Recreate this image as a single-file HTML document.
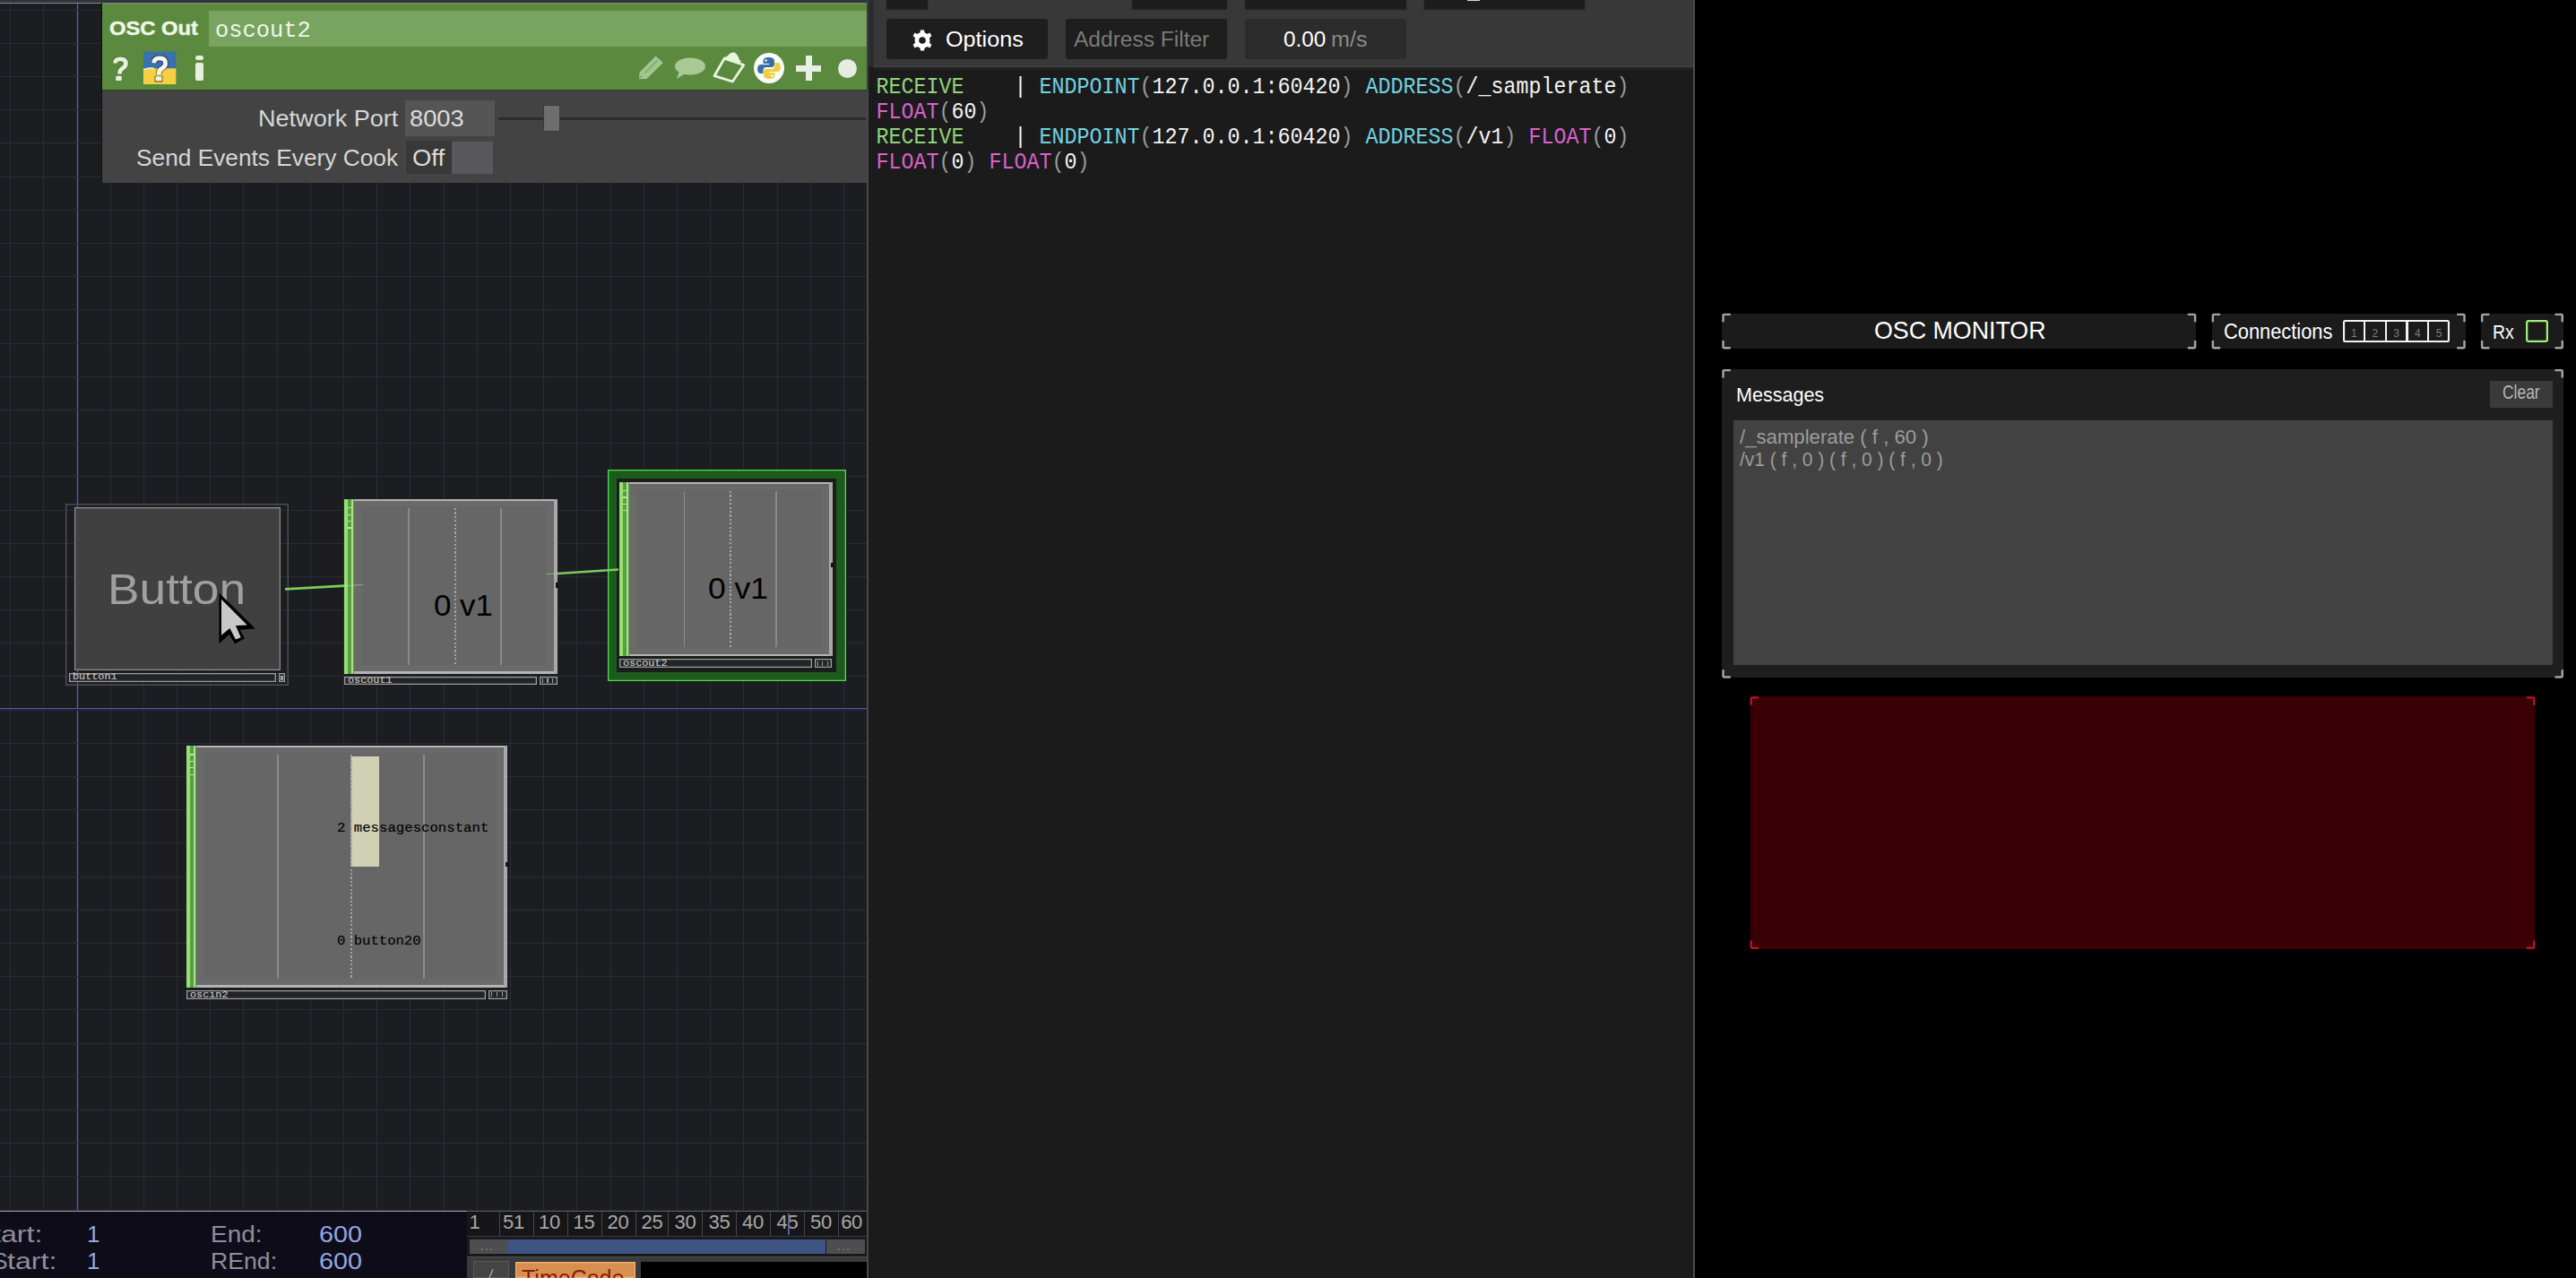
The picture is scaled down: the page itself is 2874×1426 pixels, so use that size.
<!DOCTYPE html>
<html><head><meta charset="utf-8"><style>
html,body{margin:0;padding:0;}
body{width:2874px;height:1426px;overflow:hidden;position:relative;background:#000;}
.a{position:absolute;}
.t{white-space:pre;}
</style></head><body>
<div class="a" style="left:0px;top:0px;width:967px;height:1351px;background:#1c1d21;"></div><div class="a" style="left:10.9px;top:0;width:1px;height:1351px;background:#2b2b3a"></div><div class="a" style="left:48.1px;top:0;width:1px;height:1351px;background:#2b2b3a"></div><div class="a" style="left:85.2px;top:0;width:2.6px;height:1351px;background:#25243c"></div><div class="a" style="left:85.9px;top:0;width:1px;height:1351px;background:#5f5da6"></div><div class="a" style="left:122.5px;top:0;width:1px;height:1351px;background:#2b2b3a"></div><div class="a" style="left:159.7px;top:0;width:1px;height:1351px;background:#2b2b3a"></div><div class="a" style="left:196.9px;top:0;width:1px;height:1351px;background:#2b2b3a"></div><div class="a" style="left:234.1px;top:0;width:1px;height:1351px;background:#2b2b3a"></div><div class="a" style="left:271.3px;top:0;width:1px;height:1351px;background:#2b2b3a"></div><div class="a" style="left:308.5px;top:0;width:1px;height:1351px;background:#2b2b3a"></div><div class="a" style="left:345.8px;top:0;width:1px;height:1351px;background:#2b2b3a"></div><div class="a" style="left:383.0px;top:0;width:1px;height:1351px;background:#2b2b3a"></div><div class="a" style="left:420.2px;top:0;width:1px;height:1351px;background:#2b2b3a"></div><div class="a" style="left:457.4px;top:0;width:1px;height:1351px;background:#2b2b3a"></div><div class="a" style="left:494.6px;top:0;width:1px;height:1351px;background:#2b2b3a"></div><div class="a" style="left:531.8px;top:0;width:1px;height:1351px;background:#2b2b3a"></div><div class="a" style="left:569.0px;top:0;width:1px;height:1351px;background:#2b2b3a"></div><div class="a" style="left:606.2px;top:0;width:1px;height:1351px;background:#2b2b3a"></div><div class="a" style="left:643.4px;top:0;width:1px;height:1351px;background:#2b2b3a"></div><div class="a" style="left:680.6px;top:0;width:1px;height:1351px;background:#2b2b3a"></div><div class="a" style="left:717.8px;top:0;width:1px;height:1351px;background:#2b2b3a"></div><div class="a" style="left:755.0px;top:0;width:1px;height:1351px;background:#2b2b3a"></div><div class="a" style="left:792.2px;top:0;width:1px;height:1351px;background:#2b2b3a"></div><div class="a" style="left:829.4px;top:0;width:1px;height:1351px;background:#2b2b3a"></div><div class="a" style="left:866.6px;top:0;width:1px;height:1351px;background:#2b2b3a"></div><div class="a" style="left:903.8px;top:0;width:1px;height:1351px;background:#2b2b3a"></div><div class="a" style="left:941.1px;top:0;width:1px;height:1351px;background:#2b2b3a"></div><div class="a" style="left:0;top:10.6px;width:967px;height:1px;background:#2b2b3a"></div><div class="a" style="left:0;top:47.8px;width:967px;height:1px;background:#2b2b3a"></div><div class="a" style="left:0;top:85.0px;width:967px;height:1px;background:#2b2b3a"></div><div class="a" style="left:0;top:122.2px;width:967px;height:1px;background:#2b2b3a"></div><div class="a" style="left:0;top:159.4px;width:967px;height:1px;background:#2b2b3a"></div><div class="a" style="left:0;top:196.6px;width:967px;height:1px;background:#2b2b3a"></div><div class="a" style="left:0;top:233.8px;width:967px;height:1px;background:#2b2b3a"></div><div class="a" style="left:0;top:270.9px;width:967px;height:1px;background:#2b2b3a"></div><div class="a" style="left:0;top:308.1px;width:967px;height:1px;background:#2b2b3a"></div><div class="a" style="left:0;top:345.3px;width:967px;height:1px;background:#2b2b3a"></div><div class="a" style="left:0;top:382.5px;width:967px;height:1px;background:#2b2b3a"></div><div class="a" style="left:0;top:419.7px;width:967px;height:1px;background:#2b2b3a"></div><div class="a" style="left:0;top:456.9px;width:967px;height:1px;background:#2b2b3a"></div><div class="a" style="left:0;top:494.1px;width:967px;height:1px;background:#2b2b3a"></div><div class="a" style="left:0;top:531.3px;width:967px;height:1px;background:#2b2b3a"></div><div class="a" style="left:0;top:568.5px;width:967px;height:1px;background:#2b2b3a"></div><div class="a" style="left:0;top:605.7px;width:967px;height:1px;background:#2b2b3a"></div><div class="a" style="left:0;top:642.9px;width:967px;height:1px;background:#2b2b3a"></div><div class="a" style="left:0;top:680.0px;width:967px;height:1px;background:#2b2b3a"></div><div class="a" style="left:0;top:717.2px;width:967px;height:1px;background:#2b2b3a"></div><div class="a" style="left:0;top:754.4px;width:967px;height:1px;background:#2b2b3a"></div><div class="a" style="left:0;top:789.6px;width:967px;height:3.2px;background:#25243c"></div><div class="a" style="left:0;top:790.2px;width:967px;height:1px;background:#5a5898"></div><div class="a" style="left:0;top:828.8px;width:967px;height:1px;background:#2b2b3a"></div><div class="a" style="left:0;top:866.0px;width:967px;height:1px;background:#2b2b3a"></div><div class="a" style="left:0;top:903.2px;width:967px;height:1px;background:#2b2b3a"></div><div class="a" style="left:0;top:940.4px;width:967px;height:1px;background:#2b2b3a"></div><div class="a" style="left:0;top:977.6px;width:967px;height:1px;background:#2b2b3a"></div><div class="a" style="left:0;top:1014.7px;width:967px;height:1px;background:#2b2b3a"></div><div class="a" style="left:0;top:1051.9px;width:967px;height:1px;background:#2b2b3a"></div><div class="a" style="left:0;top:1089.1px;width:967px;height:1px;background:#2b2b3a"></div><div class="a" style="left:0;top:1126.3px;width:967px;height:1px;background:#2b2b3a"></div><div class="a" style="left:0;top:1163.5px;width:967px;height:1px;background:#2b2b3a"></div><div class="a" style="left:0;top:1200.7px;width:967px;height:1px;background:#2b2b3a"></div><div class="a" style="left:0;top:1237.9px;width:967px;height:1px;background:#2b2b3a"></div><div class="a" style="left:0;top:1275.1px;width:967px;height:1px;background:#2b2b3a"></div><div class="a" style="left:0;top:1312.3px;width:967px;height:1px;background:#2b2b3a"></div><div class="a" style="left:0;top:1349.5px;width:967px;height:1px;background:#2b2b3a"></div><div class="a" style="left:0px;top:0px;width:967px;height:3px;background:#31343a;"></div><div class="a" style="left:0px;top:2.5px;width:114px;height:1.2px;background:#8a8b92;"></div><div class="a" style="left:966.5px;top:0px;width:2.5px;height:1351px;background:#3c3d42;"></div><div class="a" style="left:969px;top:0px;width:5.5px;height:1426px;background:#1b1b1c;"></div><div class="a" style="left:969px;top:0px;width:5.5px;height:75px;background:#2c2c2e;"></div><div class="a" style="left:113px;top:3px;width:854px;height:201px;background:#434343;"></div><div class="a" style="left:113px;top:3px;width:1px;height:201px;background:#101410;"></div><div class="a" style="left:114px;top:3px;width:853px;height:97px;background:#5b8a3f;"></div><div class="a" style="left:114px;top:2.8px;width:853px;height:1.8px;background:#6e8c60;"></div><div class="a" style="left:232.5px;top:12px;width:734.5px;height:40px;background:#78a460;"></div><div class="a" style="left:114px;top:99.5px;width:853px;height:2.5px;background:#34402f;"></div><div class="a t" style="left:122.15px;top:20.49px;font:bold 22px/24.57px 'Liberation Sans', sans-serif;color:#eef6e8;transform:scaleX(1.0803) ;transform-origin:0 19.91px;-webkit-text-stroke:0.45px #eef6e8;">OSC Out</div><div class="a t" style="left:239.57px;top:20.42px;font:25.8px/29.23px 'Liberation Mono', monospace;color:#eef6e8;transform:scaleX(0.9857) ;transform-origin:0 21.48px;">oscout2</div><div class="a" style="left:451.5px;top:111.5px;width:100.5px;height:40.5px;background:#555555;"></div><div class="a t" style="left:287.83px;top:118.31px;font:25.4px/28.37px 'Liberation Sans', sans-serif;color:#d6d6d6;transform:scaleX(1.0656) ;transform-origin:0 22.99px;">Network Port</div><div class="a t" style="left:457.41px;top:118.31px;font:25.4px/28.37px 'Liberation Sans', sans-serif;color:#dcdcdc;transform:scaleX(1.0737) ;transform-origin:0 22.99px;">8003</div><div class="a" style="left:556px;top:130.5px;width:410px;height:3px;background:#2b2b2b;"></div><div class="a" style="left:606.5px;top:117.5px;width:17px;height:28.5px;background:#6e6e6e;box-shadow:0 0 0 1px #3a3a3a;"></div><div class="a" style="left:453px;top:157px;width:51px;height:37px;background:#383838;"></div><div class="a" style="left:504px;top:158px;width:46px;height:36px;background:#58585c;"></div><div class="a t" style="left:151.62px;top:162.01px;font:25.4px/28.37px 'Liberation Sans', sans-serif;color:#d6d6d6;transform:scaleX(1.0349) ;transform-origin:0 22.99px;">Send Events Every Cook</div><div class="a t" style="left:459.76px;top:162.01px;font:25.4px/28.37px 'Liberation Sans', sans-serif;color:#dcdcdc;transform:scaleX(1.0807) ;transform-origin:0 22.99px;">Off</div><svg class="a" style="left:0;top:0;overflow:visible" width="967" height="100"><g fill="none" stroke-linecap="butt"><path d="M128.2 70.5 Q128.6 65.8 134.2 65.8 Q140.4 65.8 140.4 70.8 Q140.4 73.8 137.4 75.8 Q133.6 78 133.6 80.6 L133.6 82.6" stroke="#27401c" stroke-opacity="0.35" stroke-width="6.8"/><path d="M128.2 70.5 Q128.6 65.8 134.2 65.8 Q140.4 65.8 140.4 70.8 Q140.4 73.8 137.4 75.8 Q133.6 78 133.6 80.6 L133.6 82.6" stroke="#e6f0dc" stroke-width="4.8"/></g><rect x="129.2" y="84.8" width="6.6" height="5.2" rx="1.5" fill="#e6f0dc"/></svg><svg class="a" style="left:0;top:0;overflow:visible" width="967" height="100"><rect x="160" y="57.6" width="36.4" height="36.3" fill="#3a70ae"/><path d="M160 77.5 Q165 75 172 76.3 L196.4 76.3 L196.4 93.9 L160 93.9Z" fill="#f5d042"/><path d="M160 77.6 Q165 75.2 172 76.4" stroke="#e8eef0" stroke-width="1.6" fill="none"/><g fill="none"><path d="M171.6 70.2 Q172 64.8 178 64.8 Q184.6 64.8 184.6 70.4 Q184.6 73.8 181.4 75.8 Q177.4 78 177.4 80.8 L177.4 83" stroke="#2a3020" stroke-opacity="0.55" stroke-width="7"/><path d="M171.6 70.2 Q172 64.8 178 64.8 Q184.6 64.8 184.6 70.4 Q184.6 73.8 181.4 75.8 Q177.4 78 177.4 80.8 L177.4 83" stroke="#f4f8f0" stroke-width="4.8"/></g><rect x="172.4" y="84.4" width="9.2" height="7.4" rx="1" fill="#2a3020" fill-opacity="0.55"/><rect x="173.6" y="85.3" width="6.8" height="5" rx="1.2" fill="#eef4e8"/></svg><div class="a" style="left:217.6px;top:61.6px;width:9.1px;height:5.8px;background:#e6f0dc;border-radius:3px;"></div><div class="a" style="left:217.6px;top:69.7px;width:9.1px;height:20.2px;background:#e6f0dc;border-radius:2px;"></div><svg class="a" style="left:0;top:0;overflow:visible" width="967" height="100"><polygon points="712.6,88.3 713.8,80.6 731.6,62.6 739.8,70 721.5,88" fill="#a3c58e"/><path d="M719.5 81.5 L733.5 67.5" stroke="#86b070" stroke-width="2.2"/><path d="M712.6 88.3 L716 84.8" stroke="#7ea868" stroke-width="1.5"/></svg><svg class="a" style="left:752px;top:64px;overflow:visible" width="36" height="26" viewBox="0 0 36 26"><ellipse cx="18" cy="10" rx="17" ry="9.5" fill="#a9c995"/><path d="M6 15 L3 24 L14 17Z" fill="#a9c995"/></svg><svg class="a" style="left:0;top:0;overflow:visible" width="967" height="100"><polygon points="797,84.7 817.3,91 829.8,72.5 808.2,65.1" fill="none" stroke="#e6f6de" stroke-width="2.8" stroke-linejoin="round"/><path d="M808.6 65.8 L812.5 64.2 Q816.5 58.5 820 61 Q822.5 63.5 823.5 68 L826 69.5" stroke="#e6f6de" stroke-width="3.6" fill="#e6f6de" stroke-linejoin="round"/></svg><svg class="a" style="left:841px;top:59px;overflow:visible" width="34" height="34" viewBox="0 0 34 34"><circle cx="17" cy="17" r="17" fill="#fbfdf8"/><path d="M16.5 5 C11 5 10.5 7.5 10.5 9 L10.5 12 L17 12 L17 13 L8 13 C5.5 13 4 15 4 18 C4 21 5.5 23 8 23 L10.5 23 L10.5 19.5 C10.5 17.5 12 16 14 16 L20 16 C22 16 23 14.5 23 13 L23 9 C23 7 21.5 5 16.5 5Z" fill="#3a6fa6"/><circle cx="13.5" cy="8.5" r="1.2" fill="#fff"/><path d="M17.5 29 C23 29 23.5 26.5 23.5 25 L23.5 22 L17 22 L17 21 L26 21 C28.5 21 30 19 30 16 C30 13 28.5 11 26 11 L23.5 11 L23.5 14.5 C23.5 16.5 22 18 20 18 L14 18 C12 18 11 19.5 11 21 L11 25 C11 27 12.5 29 17.5 29Z" fill="#f2cd3e"/><circle cx="20.5" cy="25.5" r="1.2" fill="#fff"/></svg><div class="a" style="left:898.5px;top:62px;width:7px;height:28px;background:#e8f0e6;"></div><div class="a" style="left:888px;top:72.5px;width:27.5px;height:7px;background:#e8f0e6;"></div><div class="a" style="left:935px;top:66px;width:21px;height:21px;background:#e6ebe4;border-radius:50%;"></div><div class="a" style="left:73px;top:562px;width:248.5px;height:202.5px;background:none;box-shadow:inset 0 0 0 1.5px #4c4d52;"></div><div class="a" style="left:82.5px;top:565.8px;width:230px;height:182.5px;background:#404040;box-shadow:inset 0 0 0 1.2px #8e8e8e;"></div><div class="a t" style="left:119.74px;top:630.34px;font:48.8px/54.51px 'Liberation Sans', sans-serif;color:#a0a0a0;transform:scaleX(1.0917) ;transform-origin:0 44.16px;">Button</div><div class="a" style="left:77px;top:750.6px;width:230.5px;height:10px;background:#232428;box-shadow:inset 0 0 0 1.3px #9c9c9c;"></div><div class="a" style="left:310.5px;top:750.6px;width:7.5px;height:10px;background:#232428;box-shadow:inset 0 0 0 1.3px #9c9c9c;"></div><div class="a" style="left:312.5px;top:753.6px;width:3.5px;height:5px;background:#9c9c9c;"></div><div class="a t" style="left:81.00px;top:749.48px;font:11.8px/13.37px 'Liberation Mono', monospace;color:#c8c8c8;-webkit-text-stroke:0.15px #c8c8c8;">button1</div><div class="a" style="left:384px;top:557.2px;width:238px;height:194.4px;background:#6a6a6a;"></div><div class="a" style="left:403px;top:564.7px;width:207px;height:177.4px;background:#666666;"></div><div class="a" style="left:384px;top:557.2px;width:238px;height:2px;background:#b4b4b4;"></div><div class="a" style="left:384px;top:749.1px;width:238px;height:2.5px;background:#b4b4b4;"></div><div class="a" style="left:618px;top:557.2px;width:4px;height:194.4px;background:#a8a8a8;"></div><div class="a" style="left:384px;top:557.2px;width:10.5px;height:194.4px;background:#5c9c46;"></div><div class="a" style="left:384px;top:557.2px;width:4px;height:194.4px;background:#96e070;"></div><div class="a" style="left:391.9px;top:557.2px;width:2.6px;height:194.4px;background:#a6e48a;"></div><div class="a" style="left:388px;top:566.2px;width:3.9000000000000004px;height:1.3px;background:#b4ec98;"></div><div class="a" style="left:388px;top:573.6px;width:3.9000000000000004px;height:1.3px;background:#b4ec98;"></div><div class="a" style="left:388px;top:581.0px;width:3.9000000000000004px;height:1.3px;background:#b4ec98;"></div><div class="a" style="left:388px;top:588.4000000000001px;width:3.9000000000000004px;height:1.3px;background:#b4ec98;"></div><div class="a" style="left:455.25px;top:567.2px;width:1.6px;height:174.4px;background:#8a8a8a;"></div><div class="a" style="left:506.7px;top:567.2px;width:2px;height:174.4px;background:repeating-linear-gradient(#a4a4a4 0 2.2px, transparent 2.2px 4.4px)"></div><div class="a" style="left:558.25px;top:567.2px;width:1.6px;height:174.4px;background:#8a8a8a;"></div><div class="a t" style="left:483.60px;top:657.61px;font:32.7px/36.53px 'Liberation Sans', sans-serif;color:#000000;transform:scaleX(1.0674) ;transform-origin:0 29.59px;">0 v1</div><div class="a" style="left:384px;top:754.7px;width:215px;height:9.5px;background:#232428;box-shadow:inset 0 0 0 1.3px #9c9c9c;"></div><div class="a" style="left:602px;top:754.7px;width:20px;height:9.5px;background:#232428;box-shadow:inset 0 0 0 1.3px #9c9c9c;"></div><div class="a" style="left:604.5px;top:757.2px;width:1.3px;height:4.5px;background:#9c9c9c;"></div><div class="a" style="left:610.2692307692307px;top:757.2px;width:1.3px;height:4.5px;background:#9c9c9c;"></div><div class="a" style="left:616.0384615384615px;top:757.2px;width:1.3px;height:4.5px;background:#9c9c9c;"></div><div class="a t" style="left:388.00px;top:753.08px;font:11.8px/13.37px 'Liberation Mono', monospace;color:#c8c8c8;-webkit-text-stroke:0.15px #c8c8c8;">oscout1</div><div class="a" style="left:677.5px;top:524px;width:266px;height:235.5px;background:#1d5a1d;box-shadow:inset 0 0 0 1.3px #4be04b;"></div><div class="a" style="left:688px;top:534px;width:245px;height:215.5px;background:#1a1d1a;"></div><div class="a" style="left:691px;top:538px;width:238.3px;height:194.4px;background:#6a6a6a;"></div><div class="a" style="left:710px;top:545.5px;width:207.3px;height:177.4px;background:#666666;"></div><div class="a" style="left:691px;top:538px;width:238.3px;height:2px;background:#b4b4b4;"></div><div class="a" style="left:691px;top:729.9px;width:238.3px;height:2.5px;background:#b4b4b4;"></div><div class="a" style="left:925.3px;top:538px;width:4px;height:194.4px;background:#a8a8a8;"></div><div class="a" style="left:691px;top:538px;width:10.5px;height:194.4px;background:#5c9c46;"></div><div class="a" style="left:691px;top:538px;width:4px;height:194.4px;background:#96e070;"></div><div class="a" style="left:698.9px;top:538px;width:2.6px;height:194.4px;background:#a6e48a;"></div><div class="a" style="left:695px;top:547.0px;width:3.9000000000000004px;height:1.3px;background:#b4ec98;"></div><div class="a" style="left:695px;top:554.4px;width:3.9000000000000004px;height:1.3px;background:#b4ec98;"></div><div class="a" style="left:695px;top:561.8px;width:3.9000000000000004px;height:1.3px;background:#b4ec98;"></div><div class="a" style="left:695px;top:569.2px;width:3.9000000000000004px;height:1.3px;background:#b4ec98;"></div><div class="a" style="left:762.55px;top:548px;width:1.6px;height:174.4px;background:#8a8a8a;"></div><div class="a" style="left:813.6px;top:548px;width:2px;height:174.4px;background:repeating-linear-gradient(#a4a4a4 0 2.2px, transparent 2.2px 4.4px)"></div><div class="a" style="left:865.15px;top:548px;width:1.6px;height:174.4px;background:#8a8a8a;"></div><div class="a t" style="left:790.18px;top:638.61px;font:32.7px/36.53px 'Liberation Sans', sans-serif;color:#000000;transform:scaleX(1.0826) ;transform-origin:0 29.59px;">0 v1</div><div class="a" style="left:691px;top:735.4px;width:215.3px;height:10px;background:#232428;box-shadow:inset 0 0 0 1.3px #9c9c9c;"></div><div class="a" style="left:909.3px;top:735.4px;width:19px;height:10px;background:#232428;box-shadow:inset 0 0 0 1.3px #9c9c9c;"></div><div class="a" style="left:911.8px;top:737.9px;width:1.3px;height:5px;background:#9c9c9c;"></div><div class="a" style="left:917.1846153846153px;top:737.9px;width:1.3px;height:5px;background:#9c9c9c;"></div><div class="a" style="left:922.5692307692307px;top:737.9px;width:1.3px;height:5px;background:#9c9c9c;"></div><div class="a t" style="left:695.00px;top:734.28px;font:11.8px/13.37px 'Liberation Mono', monospace;color:#c8c8c8;-webkit-text-stroke:0.15px #c8c8c8;">oscout2</div><div class="a" style="left:208px;top:832.3px;width:357.8px;height:269.3px;background:#6a6a6a;"></div><div class="a" style="left:227px;top:839.8px;width:326.8px;height:252.3px;background:#666666;"></div><div class="a" style="left:208px;top:832.3px;width:357.8px;height:2px;background:#b4b4b4;"></div><div class="a" style="left:208px;top:1099.1px;width:357.8px;height:2.5px;background:#b4b4b4;"></div><div class="a" style="left:561.8px;top:832.3px;width:4px;height:269.3px;background:#a8a8a8;"></div><div class="a" style="left:208px;top:832.3px;width:10.5px;height:269.3px;background:#5c9c46;"></div><div class="a" style="left:208px;top:832.3px;width:4px;height:269.3px;background:#96e070;"></div><div class="a" style="left:215.9px;top:832.3px;width:2.6px;height:269.3px;background:#a6e48a;"></div><div class="a" style="left:212px;top:841.3px;width:3.9000000000000004px;height:1.3px;background:#b4ec98;"></div><div class="a" style="left:212px;top:848.6999999999999px;width:3.9000000000000004px;height:1.3px;background:#b4ec98;"></div><div class="a" style="left:212px;top:856.0999999999999px;width:3.9000000000000004px;height:1.3px;background:#b4ec98;"></div><div class="a" style="left:212px;top:863.5px;width:3.9000000000000004px;height:1.3px;background:#b4ec98;"></div><div class="a" style="left:309.25px;top:842.3px;width:1.6px;height:249.3px;background:#8a8a8a;"></div><div class="a" style="left:391px;top:842.3px;width:2px;height:249.3px;background:repeating-linear-gradient(#a4a4a4 0 2.2px, transparent 2.2px 4.4px)"></div><div class="a" style="left:472.05px;top:842.3px;width:1.6px;height:249.3px;background:#8a8a8a;"></div><div class="a" style="left:391.5px;top:844px;width:31.7px;height:123.4px;background:#d0d0b4;"></div><div class="a" style="left:391px;top:844px;width:2px;height:123.4px;background:repeating-linear-gradient(#a4a4a4 0 2.2px, transparent 2.2px 4.4px)"></div><div class="a t" style="left:376.20px;top:916.10px;font:15.5px/17.56px 'Liberation Mono', monospace;color:#000;transform:scaleX(1.0111) ;transform-origin:0 12.90px;-webkit-text-stroke:0.15px #000;">2 messagesconstant</div><div class="a t" style="left:376.36px;top:1041.50px;font:15.5px/17.56px 'Liberation Mono', monospace;color:#000;transform:scaleX(1.0061) ;transform-origin:0 12.90px;-webkit-text-stroke:0.15px #000;">0 button20</div><div class="a" style="left:208px;top:1104.8px;width:334.3px;height:10px;background:#232428;box-shadow:inset 0 0 0 1.3px #9c9c9c;"></div><div class="a" style="left:545.3px;top:1104.8px;width:20.5px;height:10px;background:#232428;box-shadow:inset 0 0 0 1.3px #9c9c9c;"></div><div class="a" style="left:547.8px;top:1107.3px;width:1.3px;height:5px;background:#9c9c9c;"></div><div class="a" style="left:553.7615384615384px;top:1107.3px;width:1.3px;height:5px;background:#9c9c9c;"></div><div class="a" style="left:559.7230769230769px;top:1107.3px;width:1.3px;height:5px;background:#9c9c9c;"></div><div class="a t" style="left:212.00px;top:1103.68px;font:11.8px/13.37px 'Liberation Mono', monospace;color:#c8c8c8;-webkit-text-stroke:0.15px #c8c8c8;">oscin2</div><div class="a" style="left:620px;top:650.3px;width:3px;height:5.4px;background:#111;"></div><div class="a" style="left:927.3px;top:627.5px;width:3px;height:5.4px;background:#111;"></div><div class="a" style="left:564px;top:962px;width:3px;height:5.4px;background:#111;"></div><svg class="a" style="left:0;top:0" width="967" height="1351"><g stroke="#7ccc5c" stroke-width="2.6" fill="none"><path d="M318 657.4 L384 653.6"/><path d="M622 640 L690 635.5"/></g><g stroke="#b8e8a0" stroke-width="1.2" opacity="0.5"><path d="M384 653.6 L405 652.5"/><path d="M609 640.5 L622 640"/></g></svg><svg class="a" style="left:0;top:0" width="967" height="1351"><polygon points="244.4,661.4 244.4,718.1 255.8,708 262,718.4 273.1,712.2 267.6,702.8 284.9,701.6" fill="#000"/><polygon points="247,668.8 247,708.7 256.4,701 262.9,713.4 268.7,711.3 262.9,698.1 275.8,697.5" fill="#c8c8c8"/></svg><div class="a" style="left:0px;top:1351px;width:969px;height:75px;background:#0e0c18;"></div><div class="a" style="left:0px;top:1350.8px;width:520.5px;height:1.2px;background:#a0a0b0;"></div><div class="a t" style="left:-8.28px;top:1363.97px;font:25px/27.93px 'Liberation Sans', sans-serif;color:#8e8e9c;transform:scaleX(1.2889) ;transform-origin:0 22.62px;">tart:</div><div class="a t" style="left:7.82px;top:1394.17px;font:25px/27.93px 'Liberation Sans', sans-serif;color:#8e8e9c;transform:scaleX(1.2889) ;transform-origin:0 22.62px;">tart:</div><div class="a t" style="left:-8.11px;top:1394.17px;font:25px/27.93px 'Liberation Sans', sans-serif;color:#8e8e9c;transform:scaleX(0.9878) ;transform-origin:0 22.62px;">S</div><div class="a t" style="left:96.87px;top:1363.97px;font:25px/27.93px 'Liberation Sans', sans-serif;color:#94a6e6;transform:scaleX(1.0299) ;transform-origin:0 22.62px;">1</div><div class="a t" style="left:96.87px;top:1394.17px;font:25px/27.93px 'Liberation Sans', sans-serif;color:#94a6e6;transform:scaleX(1.0299) ;transform-origin:0 22.62px;">1</div><div class="a t" style="left:235.07px;top:1363.16px;font:25.9px/28.93px 'Liberation Sans', sans-serif;color:#8e8e9c;transform:scaleX(1.0786) ;transform-origin:0 23.44px;">End:</div><div class="a t" style="left:235.17px;top:1393.36px;font:25.9px/28.93px 'Liberation Sans', sans-serif;color:#8e8e9c;transform:scaleX(1.0296) ;transform-origin:0 23.44px;">REnd:</div><div class="a t" style="left:355.76px;top:1363.97px;font:25px/27.93px 'Liberation Sans', sans-serif;color:#94a6e6;transform:scaleX(1.1494) ;transform-origin:0 22.62px;">600</div><div class="a t" style="left:355.76px;top:1394.17px;font:25px/27.93px 'Liberation Sans', sans-serif;color:#94a6e6;transform:scaleX(1.1494) ;transform-origin:0 22.62px;">600</div><div class="a" style="left:520.5px;top:1351.5px;width:446.5px;height:27.5px;background:#161618;"></div><div class="a" style="left:520.5px;top:1350.8px;width:446.5px;height:1.2px;background:#5a5a5e;"></div><div class="a" style="left:520.5px;top:1378.5px;width:446.5px;height:1.2px;background:#3a3a3e;"></div><div class="a" style="left:556.6999999999999px;top:1351.5px;width:1.2px;height:27.5px;background:#48484c;"></div><div class="a" style="left:594.8px;top:1351.5px;width:1.2px;height:27.5px;background:#48484c;"></div><div class="a" style="left:633.1999999999999px;top:1351.5px;width:1.2px;height:27.5px;background:#48484c;"></div><div class="a" style="left:671.0px;top:1351.5px;width:1.2px;height:27.5px;background:#48484c;"></div><div class="a" style="left:708.9px;top:1351.5px;width:1.2px;height:27.5px;background:#48484c;"></div><div class="a" style="left:745.1px;top:1351.5px;width:1.2px;height:27.5px;background:#48484c;"></div><div class="a" style="left:783.15px;top:1351.5px;width:1.2px;height:27.5px;background:#48484c;"></div><div class="a" style="left:821.0px;top:1351.5px;width:1.2px;height:27.5px;background:#48484c;"></div><div class="a" style="left:858.9px;top:1351.5px;width:1.2px;height:27.5px;background:#48484c;"></div><div class="a" style="left:896.9px;top:1351.5px;width:1.2px;height:27.5px;background:#48484c;"></div><div class="a" style="left:934.9px;top:1351.5px;width:1.2px;height:27.5px;background:#48484c;"></div><div class="a t" style="left:523.40px;top:1351.89px;font:22px/24.57px 'Liberation Sans', sans-serif;color:#a8a8a8;letter-spacing:-0.3px;">1</div><div class="a t" style="left:561.00px;top:1351.89px;font:22px/24.57px 'Liberation Sans', sans-serif;color:#a8a8a8;letter-spacing:-0.3px;">51</div><div class="a t" style="left:601.00px;top:1351.89px;font:22px/24.57px 'Liberation Sans', sans-serif;color:#a8a8a8;letter-spacing:-0.3px;">10</div><div class="a t" style="left:639.50px;top:1351.89px;font:22px/24.57px 'Liberation Sans', sans-serif;color:#a8a8a8;letter-spacing:-0.3px;">15</div><div class="a t" style="left:677.50px;top:1351.89px;font:22px/24.57px 'Liberation Sans', sans-serif;color:#a8a8a8;letter-spacing:-0.3px;">20</div><div class="a t" style="left:715.50px;top:1351.89px;font:22px/24.57px 'Liberation Sans', sans-serif;color:#a8a8a8;letter-spacing:-0.3px;">25</div><div class="a t" style="left:752.50px;top:1351.89px;font:22px/24.57px 'Liberation Sans', sans-serif;color:#a8a8a8;letter-spacing:-0.3px;">30</div><div class="a t" style="left:790.50px;top:1351.89px;font:22px/24.57px 'Liberation Sans', sans-serif;color:#a8a8a8;letter-spacing:-0.3px;">35</div><div class="a t" style="left:828.00px;top:1351.89px;font:22px/24.57px 'Liberation Sans', sans-serif;color:#a8a8a8;letter-spacing:-0.3px;">40</div><div class="a t" style="left:866.50px;top:1351.89px;font:22px/24.57px 'Liberation Sans', sans-serif;color:#a8a8a8;letter-spacing:-0.3px;">45</div><div class="a t" style="left:904.00px;top:1351.89px;font:22px/24.57px 'Liberation Sans', sans-serif;color:#a8a8a8;letter-spacing:-0.3px;">50</div><div class="a t" style="left:938.20px;top:1351.89px;font:22px/24.57px 'Liberation Sans', sans-serif;color:#a8a8a8;letter-spacing:-0.3px;">60</div><div class="a" style="left:878.8px;top:1354px;width:2.2px;height:24px;background:#5060a8;"></div><div class="a" style="left:520.5px;top:1379.7px;width:446.5px;height:22.5px;background:#1a1a1e;"></div><div class="a" style="left:524px;top:1383px;width:42px;height:16px;background:#4e4e50;"></div><div class="a" style="left:566px;top:1383px;width:354.7px;height:16px;background:#3e5482;"></div><div class="a" style="left:921.6px;top:1383px;width:43px;height:16px;background:#4e4e50;"></div><div class="a" style="left:537px;top:1393px;width:2.2px;height:2.2px;background:#6a6a6c;"></div><div class="a" style="left:542px;top:1393px;width:2.2px;height:2.2px;background:#6a6a6c;"></div><div class="a" style="left:547px;top:1393px;width:2.2px;height:2.2px;background:#6a6a6c;"></div><div class="a" style="left:935px;top:1393px;width:2.2px;height:2.2px;background:#6a6a6c;"></div><div class="a" style="left:940px;top:1393px;width:2.2px;height:2.2px;background:#6a6a6c;"></div><div class="a" style="left:945px;top:1393px;width:2.2px;height:2.2px;background:#6a6a6c;"></div><div class="a" style="left:520.5px;top:1402.2px;width:446.5px;height:24px;background:#3a3a3a;"></div><div class="a" style="left:520.5px;top:1402.2px;width:446.5px;height:1.2px;background:#505050;"></div><div class="a" style="left:528px;top:1407px;width:40px;height:19px;background:#444444;box-shadow:inset 0 0 0 1px #5a5a5a;"></div><svg class="a" style="left:0;top:0" width="967" height="1426"><path d="M546 1426 L550 1416" stroke="#9a9a9a" stroke-width="1.6"/></svg><div class="a" style="left:575px;top:1408px;width:134px;height:18px;background:#d8904e;box-shadow:inset 0 0 0 1.2px #f2b27a;"></div><div class="a t" style="left:582.00px;top:1413.38px;font:25px/27.93px 'Liberation Sans', sans-serif;color:#8a1c12;">TimeCode</div><div class="a" style="left:714.5px;top:1408px;width:252.5px;height:18px;background:#000000;"></div><div class="a" style="left:966.8px;top:100px;width:2.2px;height:1326px;background:#48484c;"></div><div class="a" style="left:974.5px;top:0px;width:914.5px;height:1426px;background:#1b1b1b;"></div><div class="a" style="left:974.5px;top:0px;width:914.5px;height:73px;background:#383838;"></div><div class="a" style="left:974.5px;top:73px;width:914.5px;height:2px;background:#3e3e3e;"></div><div class="a" style="left:974.5px;top:75px;width:914.5px;height:3px;background:#222222;"></div><div class="a" style="left:1888.6px;top:0px;width:2.6px;height:1426px;background:#4a4a4a;"></div><div class="a" style="left:989px;top:0px;width:45.799999999999955px;height:9.8px;background:#1d1d1d;box-shadow:0 1px 1.5px rgba(0,0,0,0.35);"></div><div class="a" style="left:1263px;top:0px;width:105.79999999999995px;height:9.8px;background:#1d1d1d;box-shadow:0 1px 1.5px rgba(0,0,0,0.35);"></div><div class="a" style="left:1388.8px;top:0px;width:180.0px;height:9.8px;background:#1d1d1d;box-shadow:0 1px 1.5px rgba(0,0,0,0.35);"></div><div class="a" style="left:1588.5px;top:0px;width:179.9000000000001px;height:9.8px;background:#1d1d1d;box-shadow:0 1px 1.5px rgba(0,0,0,0.35);"></div><div class="a" style="left:989.3px;top:21px;width:179.3px;height:45px;background:#1e1e1e;border-radius:3px;"></div><div class="a" style="left:1189.3px;top:21px;width:179.3px;height:45px;background:#1e1e1e;border-radius:3px;"></div><div class="a" style="left:1389px;top:21px;width:179.8px;height:45.4px;background:#2c2c2c;border-radius:3px;"></div><div class="a" style="left:1637px;top:0px;width:14px;height:1.3px;background:#d8d8d8;"></div><svg class="a" style="left:1017px;top:32.5px" width="24" height="24" viewBox="0 0 24 24"><path fill="#fff" fill-rule="evenodd" d="M10 0.5 H14 L14.6 3.6 Q16.2 4.1 17.5 5 L20.4 3.6 L22.4 7.1 L20 9.2 Q20.4 10.6 20.4 12 Q20.4 13.4 20 14.8 L22.4 16.9 L20.4 20.4 L17.5 19 Q16.2 19.9 14.6 20.4 L14 23.5 H10 L9.4 20.4 Q7.8 19.9 6.5 19 L3.6 20.4 L1.6 16.9 L4 14.8 Q3.6 13.4 3.6 12 Q3.6 10.6 4 9.2 L1.6 7.1 L3.6 3.6 L6.5 5 Q7.8 4.1 9.4 3.6 Z M12 8.2 A3.8 3.8 0 1 0 12 15.8 A3.8 3.8 0 1 0 12 8.2 Z"/></svg><div class="a t" style="left:1054.57px;top:30.35px;font:24.7px/27.59px 'Liberation Sans', sans-serif;color:#ffffff;transform:scaleX(1.0203) ;transform-origin:0 22.35px;">Options</div><div class="a t" style="left:1197.70px;top:30.35px;font:24.7px/27.59px 'Liberation Sans', sans-serif;color:#7a7a7a;transform:scaleX(0.9932) ;transform-origin:0 22.35px;">Address Filter</div><div class="a t" style="left:1431.63px;top:30.35px;font:24.7px/27.59px 'Liberation Sans', sans-serif;color:#ffffff;transform:scaleX(0.9829) ;transform-origin:0 22.35px;">0.00</div><div class="a t" style="left:1485.36px;top:30.35px;font:24.7px/27.59px 'Liberation Sans', sans-serif;color:#8a8a8a;transform:scaleX(1.0188) ;transform-origin:0 22.35px;">m/s</div><div class="a t" style="left:977.50px;top:85.38px;font:23.33px/26.43px 'Liberation Mono', monospace;color:#fff;transform:scaleY(1.1) ;transform-origin:0 19.42px;"><span style="color:#8fd57a">RECEIVE</span>    <span style="color:#f4f4f4">|</span> <span style="color:#72d2e2">ENDPOINT</span><span style="color:#9a9a9a">(</span><span style="color:#f4f4f4">127.0.0.1:60420</span><span style="color:#9a9a9a">)</span> <span style="color:#72d2e2">ADDRESS</span><span style="color:#9a9a9a">(</span><span style="color:#f4f4f4">/_samplerate</span><span style="color:#9a9a9a">)</span></div><div class="a t" style="left:977.50px;top:113.18px;font:23.33px/26.43px 'Liberation Mono', monospace;color:#fff;transform:scaleY(1.1) ;transform-origin:0 19.42px;"><span style="color:#da62cc">FLOAT</span><span style="color:#9a9a9a">(</span><span style="color:#f4f4f4">60</span><span style="color:#9a9a9a">)</span></div><div class="a t" style="left:977.50px;top:140.98px;font:23.33px/26.43px 'Liberation Mono', monospace;color:#fff;transform:scaleY(1.1) ;transform-origin:0 19.42px;"><span style="color:#8fd57a">RECEIVE</span>    <span style="color:#f4f4f4">|</span> <span style="color:#72d2e2">ENDPOINT</span><span style="color:#9a9a9a">(</span><span style="color:#f4f4f4">127.0.0.1:60420</span><span style="color:#9a9a9a">)</span> <span style="color:#72d2e2">ADDRESS</span><span style="color:#9a9a9a">(</span><span style="color:#f4f4f4">/v1</span><span style="color:#9a9a9a">)</span> <span style="color:#da62cc">FLOAT</span><span style="color:#9a9a9a">(</span><span style="color:#f4f4f4">0</span><span style="color:#9a9a9a">)</span></div><div class="a t" style="left:977.50px;top:168.78px;font:23.33px/26.43px 'Liberation Mono', monospace;color:#fff;transform:scaleY(1.1) ;transform-origin:0 19.42px;"><span style="color:#da62cc">FLOAT</span><span style="color:#9a9a9a">(</span><span style="color:#f4f4f4">0</span><span style="color:#9a9a9a">)</span> <span style="color:#da62cc">FLOAT</span><span style="color:#9a9a9a">(</span><span style="color:#f4f4f4">0</span><span style="color:#9a9a9a">)</span></div><div class="a" style="left:1891.2px;top:0px;width:982.8px;height:1426px;background:#000000;"></div><div class="a" style="left:1921.3px;top:349.7px;width:529px;height:39.8px;background:#1b1b1b;"></div><svg class="a" style="left:0;top:0" width="2874" height="1426"><path d="M1930.8 350.9 L1924.0 350.9 Q1922.5 350.9 1922.5 352.4 L1922.5 359.2 M2440.8 350.9 L2447.6000000000004 350.9 Q2449.1000000000004 350.9 2449.1000000000004 352.4 L2449.1000000000004 359.2 M1930.8 388.3 L1924.0 388.3 Q1922.5 388.3 1922.5 386.8 L1922.5 380.0 M2440.8 388.3 L2447.6000000000004 388.3 Q2449.1000000000004 388.3 2449.1000000000004 386.8 L2449.1000000000004 380.0" fill="none" stroke="#a4a4a4" stroke-width="2.4"/></svg><div class="a t" style="left:2091.19px;top:353.39px;font:28.3px/31.61px 'Liberation Sans', sans-serif;color:#ffffff;transform:scaleX(0.9466) ;transform-origin:0 25.61px;">OSC MONITOR</div><div class="a" style="left:2467.6px;top:349.7px;width:283px;height:39.8px;background:#1b1b1b;"></div><svg class="a" style="left:0;top:0" width="2874" height="1426"><path d="M2477.1 350.9 L2470.2999999999997 350.9 Q2468.7999999999997 350.9 2468.7999999999997 352.4 L2468.7999999999997 359.2 M2741.2 350.9 L2748.0 350.9 Q2749.5 350.9 2749.5 352.4 L2749.5 359.2 M2477.1 388.3 L2470.2999999999997 388.3 Q2468.7999999999997 388.3 2468.7999999999997 386.8 L2468.7999999999997 380.0 M2741.2 388.3 L2748.0 388.3 Q2749.5 388.3 2749.5 386.8 L2749.5 380.0" fill="none" stroke="#a4a4a4" stroke-width="2.4"/></svg><div class="a t" style="left:2481.21px;top:356.63px;font:23.5px/26.25px 'Liberation Sans', sans-serif;color:#ffffff;transform:scaleX(0.9288) ;transform-origin:0 21.27px;">Connections</div><div class="a" style="left:2614.3px;top:357.1px;width:118.6px;height:24.9px;background:#1b1b1b;border-radius:2.5px;box-shadow:inset 0 0 0 2.1px #f2f2f2;"></div><div class="a t" style="left:2622.90px;top:365.54px;font:12px/13.40px 'Liberation Sans', sans-serif;color:#7e7e7e;">1</div><div class="a" style="left:2636.92px;top:357.1px;width:2.2px;height:24.9px;background:#f2f2f2;"></div><div class="a t" style="left:2646.62px;top:365.54px;font:12px/13.40px 'Liberation Sans', sans-serif;color:#7e7e7e;">2</div><div class="a" style="left:2660.6400000000003px;top:357.1px;width:2.2px;height:24.9px;background:#f2f2f2;"></div><div class="a t" style="left:2670.34px;top:365.54px;font:12px/13.40px 'Liberation Sans', sans-serif;color:#7e7e7e;">3</div><div class="a" style="left:2684.36px;top:357.1px;width:2.2px;height:24.9px;background:#f2f2f2;"></div><div class="a t" style="left:2694.06px;top:365.54px;font:12px/13.40px 'Liberation Sans', sans-serif;color:#7e7e7e;">4</div><div class="a" style="left:2708.0800000000004px;top:357.1px;width:2.2px;height:24.9px;background:#f2f2f2;"></div><div class="a t" style="left:2717.78px;top:365.54px;font:12px/13.40px 'Liberation Sans', sans-serif;color:#7e7e7e;">5</div><div class="a" style="left:2767.9px;top:349.7px;width:92.1px;height:39.8px;background:#1b1b1b;"></div><svg class="a" style="left:0;top:0" width="2874" height="1426"><path d="M2777.4 350.9 L2770.6 350.9 Q2769.1 350.9 2769.1 352.4 L2769.1 359.2 M2850.5 350.9 L2857.3 350.9 Q2858.8 350.9 2858.8 352.4 L2858.8 359.2 M2777.4 388.3 L2770.6 388.3 Q2769.1 388.3 2769.1 386.8 L2769.1 380.0 M2850.5 388.3 L2857.3 388.3 Q2858.8 388.3 2858.8 386.8 L2858.8 380.0" fill="none" stroke="#a4a4a4" stroke-width="2.4"/></svg><div class="a t" style="left:2780.64px;top:357.54px;font:22.5px/25.13px 'Liberation Sans', sans-serif;color:#ffffff;transform:scaleX(0.8653) ;transform-origin:0 20.36px;">Rx</div><div class="a" style="left:2817.5px;top:357.4px;width:25.8px;height:24.4px;background:#1b1b1b;border-radius:3px;box-shadow:inset 0 0 0 2.3px #a0ec78, 0 0 0 1px #0c1a08;"></div><div class="a" style="left:1921.3px;top:411.9px;width:938.7px;height:344.1px;background:#1e1e1e;"></div><svg class="a" style="left:0;top:0" width="2874" height="1426"><path d="M1930.8 413.09999999999997 L1924.0 413.09999999999997 Q1922.5 413.09999999999997 1922.5 414.59999999999997 L1922.5 421.4 M2850.5 413.09999999999997 L2857.3 413.09999999999997 Q2858.8 413.09999999999997 2858.8 414.59999999999997 L2858.8 421.4 M1930.8 755.5 L1924.0 755.5 Q1922.5 755.5 1922.5 754.0 L1922.5 747.2 M2850.5 755.5 L2857.3 755.5 Q2858.8 755.5 2858.8 754.0 L2858.8 747.2" fill="none" stroke="#a4a4a4" stroke-width="2.4"/></svg><div class="a t" style="left:1936.88px;top:428.14px;font:22.5px/25.13px 'Liberation Sans', sans-serif;color:#ffffff;transform:scaleX(0.9569) ;transform-origin:0 20.36px;">Messages</div><div class="a" style="left:2777.7px;top:425px;width:70.7px;height:30px;background:#3a3a3a;"></div><div class="a t" style="left:2791.73px;top:427.23px;font:21.4px/23.90px 'Liberation Sans', sans-serif;color:#b8b8b8;transform:scaleX(0.8140) ;transform-origin:0 19.37px;">Clear</div><div class="a" style="left:1934px;top:468.6px;width:914px;height:273.1px;background:#424242;"></div><div class="a t" style="left:1941.00px;top:476.05px;font:21.6px/24.13px 'Liberation Sans', sans-serif;color:#9c9c9c;transform:scaleX(1.0265) ;transform-origin:0 19.55px;">/_samplerate ( f , 60 )</div><div class="a t" style="left:1941.00px;top:501.25px;font:21.6px/24.13px 'Liberation Sans', sans-serif;color:#9c9c9c;transform:scaleX(0.9693) ;transform-origin:0 19.55px;">/v1 ( f , 0 ) ( f , 0 ) ( f , 0 )</div><div class="a" style="left:1952.5px;top:777.2px;width:875.9px;height:281.7px;background:#3b0003;"></div><svg class="a" style="left:0;top:0" width="2874" height="1426"><path d="M1962.0 778.4000000000001 L1955.2 778.4000000000001 Q1953.7 778.4000000000001 1953.7 779.9000000000001 L1953.7 786.7 M2818.9 778.4000000000001 L2825.7000000000003 778.4000000000001 Q2827.2000000000003 778.4000000000001 2827.2000000000003 779.9000000000001 L2827.2000000000003 786.7 M1962.0 1057.7 L1955.2 1057.7 Q1953.7 1057.7 1953.7 1056.2 L1953.7 1049.4 M2818.9 1057.7 L2825.7000000000003 1057.7 Q2827.2000000000003 1057.7 2827.2000000000003 1056.2 L2827.2000000000003 1049.4" fill="none" stroke="#b81228" stroke-width="2.4"/></svg>
</body></html>
